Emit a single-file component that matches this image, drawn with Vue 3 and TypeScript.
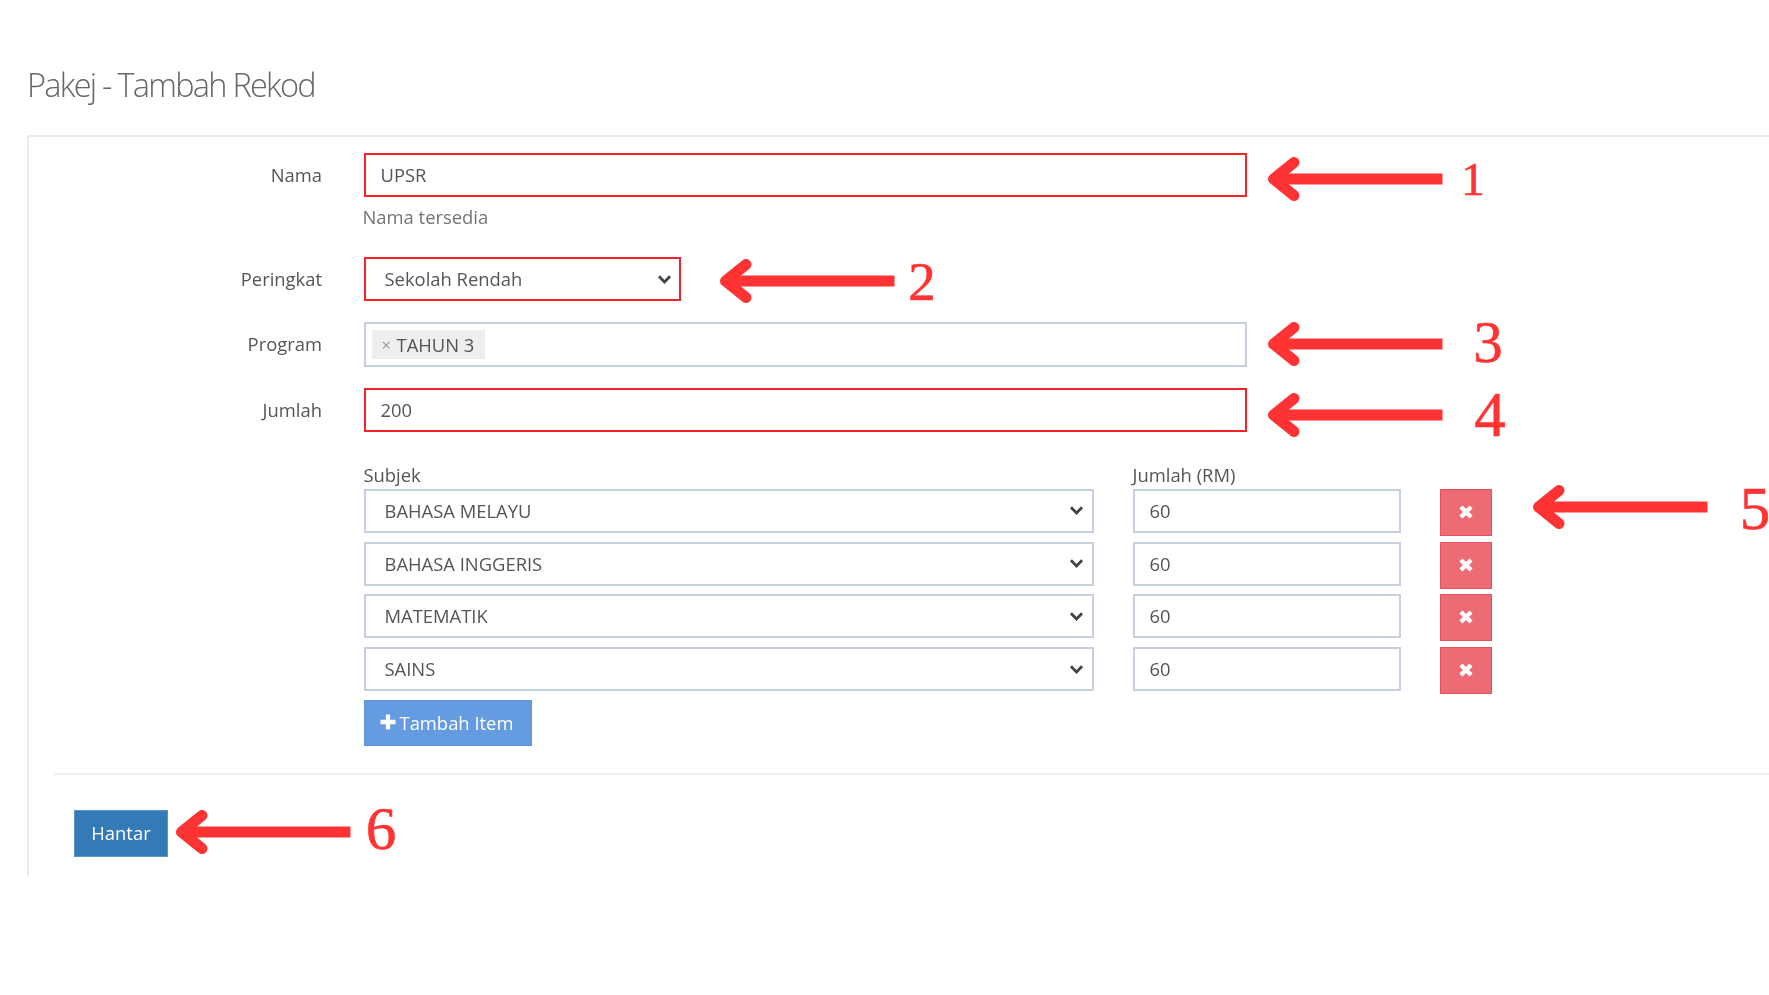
<script setup lang="ts">
interface Subject { name: string; amount: string }
interface Callout { x: number; y: number; digit: string; dx: number; dy: number; size: number }

const subjects: Subject[] = [
  { name: 'BAHASA MELAYU', amount: '60' },
  { name: 'BAHASA INGGERIS', amount: '60' },
  { name: 'MATEMATIK', amount: '60' },
  { name: 'SAINS', amount: '60' },
]

const callouts: Callout[] = [
  { x: 1268, y: 179, digit: '1', dx: 1473, dy: 195, size: 47 },
  { x: 720, y: 281, digit: '2', dx: 922, dy: 300, size: 55 },
  { x: 1268, y: 344, digit: '3', dx: 1488, dy: 362, size: 59 },
  { x: 1268, y: 415, digit: '4', dx: 1490, dy: 436, size: 63 },
  { x: 1533, y: 507, digit: '5', dx: 1755, dy: 529, size: 61 },
  { x: 176, y: 832, digit: '6', dx: 381, dy: 849, size: 61 },
]
</script>

<template>
  <div class="page">
    <h1 class="title">Pakej - Tambah Rekod</h1>

    <section class="panel">
      <div class="row row-nama">
        <label class="label">Nama</label>
        <div>
          <input class="control flagged" value="UPSR" />
          <p class="help">Nama tersedia</p>
        </div>
      </div>

      <div class="row">
        <label class="label">Peringkat</label>
        <div class="select-wrap narrow">
          <select class="control select flagged">
            <option>Sekolah Rendah</option>
          </select>
          <svg class="chevron" viewBox="0 0 14 10"><path d="M1.8 2 7 7.4 12.2 2" /></svg>
        </div>
      </div>

      <div class="row">
        <label class="label">Program</label>
        <div class="control tags">
          <span class="tag"><span class="tag-x">×</span>TAHUN 3</span>
        </div>
      </div>

      <div class="row row-jumlah">
        <label class="label">Jumlah</label>
        <input class="control flagged" value="200" />
      </div>

      <div class="row">
        <div></div>
        <div>
          <div class="items">
            <span class="col-head">Subjek</span>
            <span class="col-head">Jumlah (RM)</span>
            <span></span>
            <template v-for="s in subjects" :key="s.name">
              <div class="select-wrap">
                <select class="control select">
                  <option>{{ s.name }}</option>
                </select>
                <svg class="chevron" viewBox="0 0 14 10"><path d="M1.8 2 7 7.4 12.2 2" /></svg>
              </div>
              <input class="control" :value="s.amount" />
              <button class="remove" type="button" aria-label="Padam">
                <svg viewBox="0 0 14 14"><path d="M2.6 2.6 11.4 11.4M11.4 2.6 2.6 11.4" /></svg>
              </button>
            </template>
          </div>
          <button class="add" type="button">
            <svg viewBox="0 0 15 15"><path d="M7.5 0.500v14M0.500 7.500h14" /></svg>
            Tambah Item
          </button>
        </div>
      </div>

      <div class="actions">
        <button class="submit" type="button">Hantar</button>
      </div>
    </section>

    <svg class="notes" viewBox="0 0 1769 995">
      <g v-for="c in callouts" :key="c.digit">
        <g :transform="`translate(${c.x} ${c.y})`">
          <path class="shaft" d="M8 0H174.500" />
          <path class="head" d="M26 -16.500 5.500 0 26 16.500" />
        </g>
        <text class="digit" :x="c.dx" :y="c.dy" :font-size="c.size">{{ c.digit }}</text>
      </g>
    </svg>
  </div>
</template>

<style>
html, body { margin: 0; background: #fff; }
</style>

<style scoped>
.page {
  position: relative;
  width: 1769px;
  height: 995px;
  overflow: hidden;
  background: #fff;
  font-family: "Open Sans", "DejaVu Sans", sans-serif;
  font-size: 18.4px;
  color: #555;
}
.title {
  margin: 65px 0 30px 27px;
  font-size: 32.500px;
  line-height: 40px;
  font-weight: 300;
  letter-spacing: -1.75px;
  color: #666;
  filter: blur(0.4px);
}
.panel {
  margin-left: 27px;
  padding: 16px 0 19px;
  border-top: 2px solid #e7ecf1;
  border-left: 2px solid #e7ecf1;
  filter: blur(0.4px);
}
.row {
  display: grid;
  grid-template-columns: 293px 883.500px;
  column-gap: 41.500px;
  margin-bottom: 21px;
}
.row-nama { margin-bottom: 29px; }
.row-jumlah { margin-bottom: 32px; }
.label {
  text-align: right;
  line-height: 44px;
  color: #555;
}
.control {
  display: block;
  box-sizing: border-box;
  width: 100%;
  height: 44px;
  padding: 0 15px 1px;
  border: 2px solid #c8d0df;
  border-radius: 0;
  outline: none;
  background: #fff;
  font: inherit;
  color: #555;
}
.flagged { border-color: #f5222a; }
.help {
  margin: 9px 0 0 -1px;
  line-height: 22px;
  color: #737373;
}
.select-wrap { position: relative; }
.narrow { width: 317.500px; }
.select {
  appearance: none;
  padding-left: 19px;
}
.chevron {
  position: absolute;
  top: 16.500px;
  right: 9.500px;
  width: 15px;
  height: 11px;
  pointer-events: none;
}
.chevron path {
  fill: none;
  stroke: #444;
  stroke-width: 2.6;
}
.tags {
  display: flex;
  align-items: center;
  height: 45px;
  padding: 0 6px;
}
.tag {
  display: flex;
  align-items: center;
  box-sizing: border-box;
  width: 113px;
  height: 29px;
  padding: 0 0 1px 10px;
  background: #eee;
  white-space: nowrap;
}
.tag-x {
  width: 15px;
  font-size: 16.500px;
  color: #999;
}
.items {
  display: grid;
  grid-template-columns: 730px 268.500px 51.500px;
  grid-template-rows: 19px;
  grid-auto-rows: 47px;
  column-gap: 39px;
  row-gap: 5.800px;
}
.col-head {
  display: block;
  line-height: 22px;
  color: #555;
}
.remove {
  display: flex;
  align-items: center;
  justify-content: center;
  width: 51.500px;
  height: 47px;
  padding: 0;
  border: 1px solid #e7505a;
  background: #ed6b75;
  cursor: pointer;
}
.remove svg {
  width: 16px;
  height: 16px;
  margin-top: -1px;
}
.remove path {
  fill: none;
  stroke: #fff;
  stroke-width: 3.8;
}
.add {
  display: flex;
  align-items: center;
  gap: 4px;
  box-sizing: border-box;
  width: 168px;
  height: 46px;
  margin-top: 6px;
  padding: 0 0 2px 15px;
  border: 1px solid #5e94dc;
  background: #659be0;
  font: inherit;
  color: #fff;
  cursor: pointer;
}
.add svg {
  width: 16px;
  height: 16px;
}
.add path {
  fill: none;
  stroke: #fff;
  stroke-width: 4;
}
.actions {
  margin: 27px 0 0 25px;
  padding: 35px 0 0 20px;
  border-top: 2px solid #eef1f5;
}
.submit {
  display: block;
  box-sizing: border-box;
  width: 94px;
  height: 47px;
  padding: 0 0 2px;
  border: 1px solid #5b93c4;
  background: #337ab7;
  font: inherit;
  color: #fff;
  cursor: pointer;
}
.notes {
  position: absolute;
  inset: 0;
  width: 1769px;
  height: 995px;
  pointer-events: none;
}
.shaft {
  fill: none;
  stroke: #ff3333;
  stroke-width: 11;
}
.head {
  fill: none;
  stroke: #ff3333;
  stroke-width: 11;
  stroke-linecap: round;
  stroke-linejoin: round;
}
.digit {
  fill: #ff3333;
  stroke: #ff3333;
  stroke-width: 0.6;
  font-family: "Liberation Serif", serif;
  text-anchor: middle;
}
</style>
